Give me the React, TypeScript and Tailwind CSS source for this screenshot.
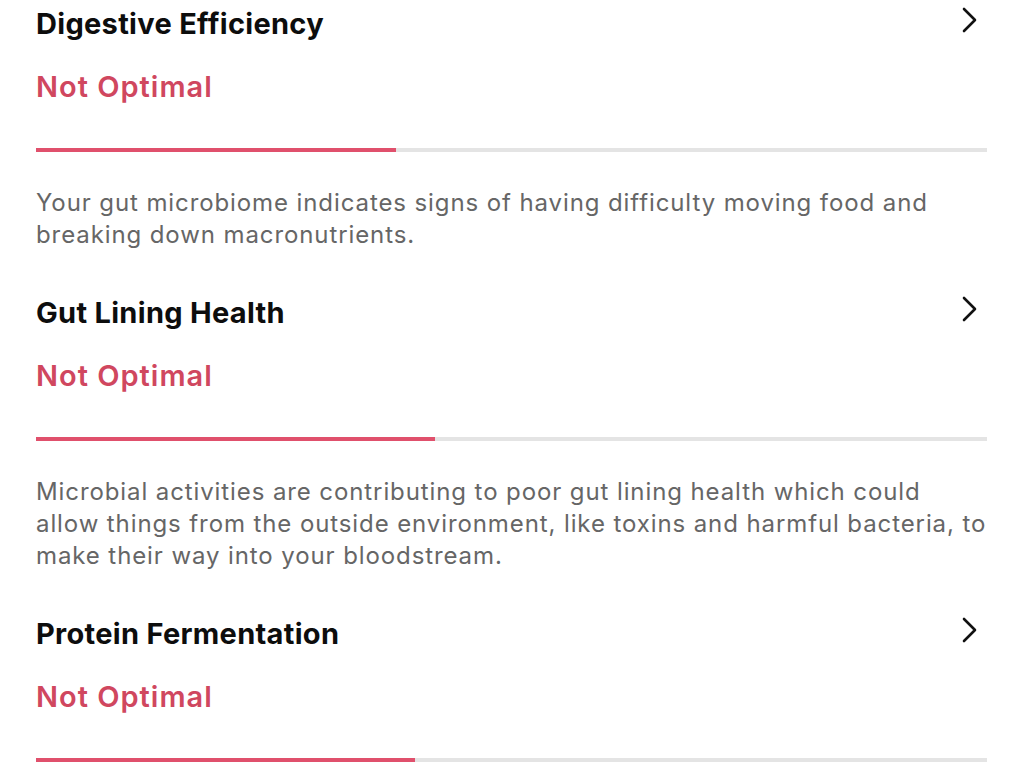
const items = [
  {
    title: "Digestive Efficiency",
    status: "Not Optimal",
    pct: 37.9,
    desc: "Your gut microbiome indicates signs of having difficulty moving food and breaking down macronutrients.",
  },
  {
    title: "Gut Lining Health",
    status: "Not Optimal",
    pct: 42,
    desc: "Microbial activities are contributing to poor gut lining health which could allow things from the outside environment, like toxins and harmful bacteria, to make their way into your bloodstream.",
  },
  {
    title: "Protein Fermentation",
    status: "Not Optimal",
    pct: 39.9,
    desc: "",
  },
];

function Chevron() {
  return (
    <svg width="20" height="28" viewBox="0 0 20 28" fill="none" className="shrink-0">
      <path d="M5 3 L16 14 L5 25" stroke="#111" strokeWidth="2.6" strokeLinecap="round" strokeLinejoin="round" />
    </svg>
  );
}

function Marker({ item }: { item: (typeof items)[number] }) {
  return (
    <div className="flex flex-col">
      <div className="flex items-center justify-between h-12">
        <h3 className="text-[29px] leading-[48px] font-bold text-[#0d0d0d] tracking-[0.3px]">{item.title}</h3>
        <div className="mr-[8px] -mt-2">
          <Chevron />
        </div>
      </div>
      <div className="mt-[15px] h-12 text-[29px] leading-[48px] font-semibold text-[#d0475f] tracking-[1px]">
        {item.status}
      </div>
      <div className="mt-[37px] h-[4px] w-full bg-[#e4e4e4]">
        <div className="h-full bg-[#e0506c]" style={{ width: `${item.pct}%` }} />
      </div>
      {item.desc && (
        <p className="mt-[35px] text-[24px] leading-[32px] text-[#666666] tracking-[0.9px]">{item.desc}</p>
      )}
    </div>
  );
}

export default function App() {
  return (
    <div className="w-[1024px] h-[780px] overflow-hidden bg-white font-['Inter',sans-serif]">
      <div className="flex flex-col gap-[38px] pl-[36px] pr-[37px]">
        {items.map((item) => (
          <Marker key={item.title} item={item} />
        ))}
      </div>
    </div>
  );
}
